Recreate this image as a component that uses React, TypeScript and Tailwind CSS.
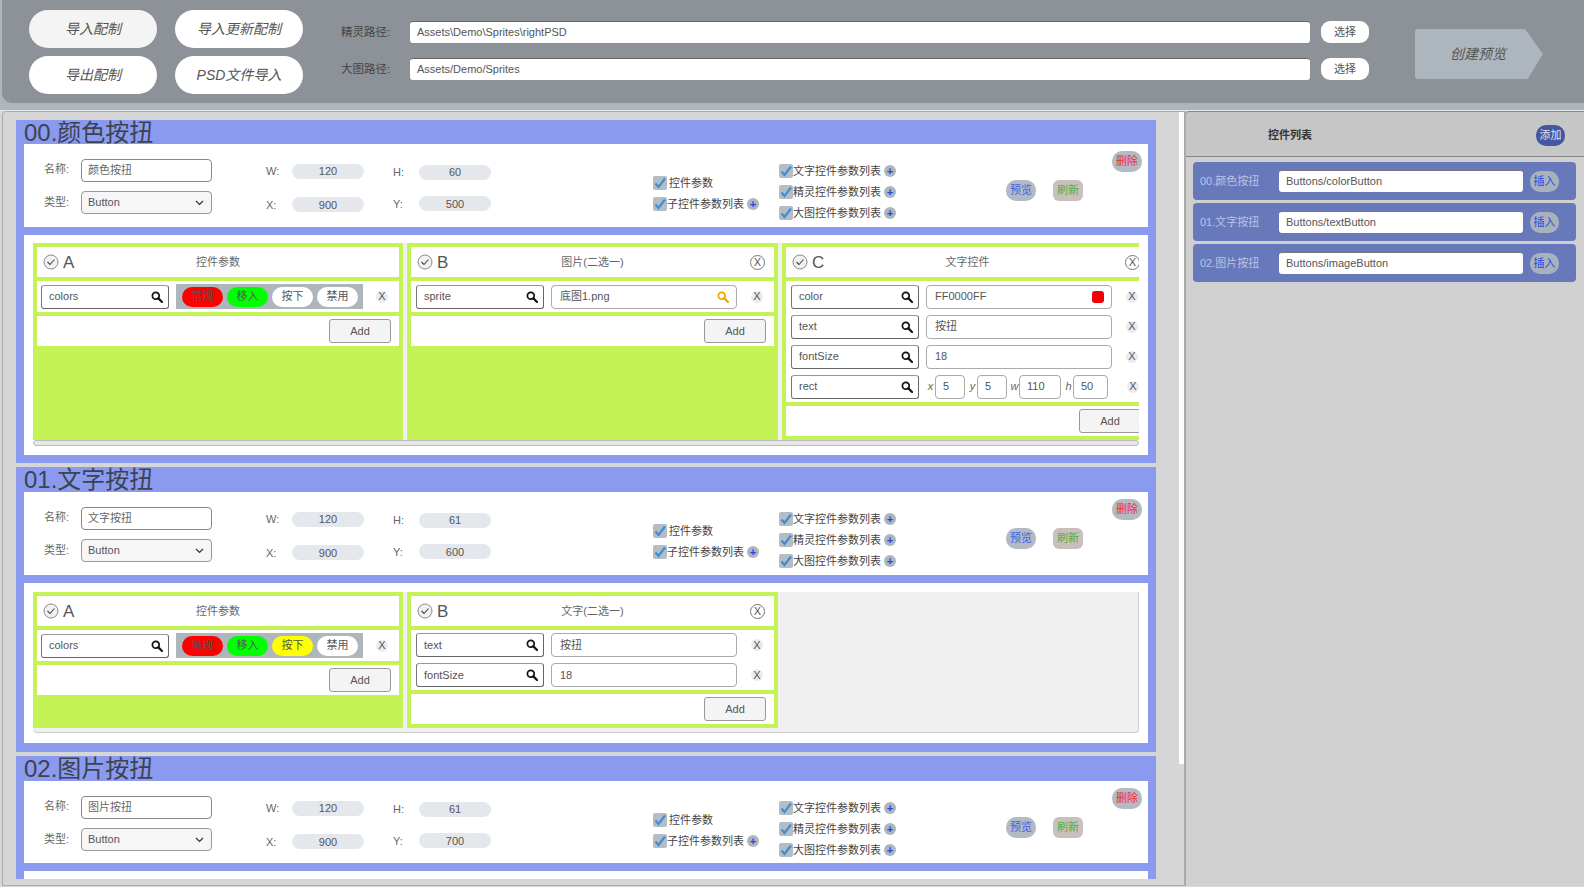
import { ReactNode } from "react";

const FONT = "font-['Liberation_Sans','Noto_Sans_CJK_SC',sans-serif]";

interface SectionData {
  title: string;
  name: string;
  h: string;
  x: string;
  y: string;
  head: string;
  row: string;
  pad: string;
}

const SearchIcon = ({ color = "#111" }: { color?: string }) => (
  <svg width="12" height="12" viewBox="0 0 12 12" fill="none" stroke={color}>
    <circle cx="4.8" cy="4.8" r="3.4" strokeWidth="1.7" />
    <path d="M7.4 7.4 L11 11" strokeWidth="2.2" strokeLinecap="round" />
  </svg>
);

const CheckCircle = () => (
  <svg width="16" height="16" viewBox="0 0 16 16" fill="none" className="shrink-0">
    <circle cx="8" cy="8" r="7" fill="#f2f2f2" stroke="#8a8a8a" />
    <path d="M4.5 8 L7 10.5 L11.5 5.5" stroke="#444" strokeWidth="1.1" />
  </svg>
);

const CloseCircle = () => (
  <div className="w-[15px] h-[15px] shrink-0 rounded-full border border-[#777] flex items-center justify-center text-[11px] leading-none text-[#555]">
    X
  </div>
);

const RemoveX = () => (
  <div className="w-[12px] h-[12px] shrink-0 rounded-full bg-[#e9ecef] flex items-center justify-center text-[11px] leading-none text-[#555]">
    X
  </div>
);

const Check = () => (
  <svg width="14" height="14" viewBox="0 0 14 14" className="shrink-0">
    <rect width="14" height="14" rx="2" fill="#b4bcc6" />
    <path d="M2.5 7.5 L5.5 11 L12 2.5" fill="none" stroke="#3f8fd0" strokeWidth="2.2" />
  </svg>
);

const Plus = () => (
  <div className="w-[12px] h-[12px] shrink-0 rounded-full bg-[#adb5bd] flex items-center justify-center text-[11px] leading-none font-bold text-[#2846e8]">
    +
  </div>
);

const SearchField = ({ label }: { label: string }) => (
  <div className="w-[128px] h-[24px] shrink-0 rounded-[3px] border border-[#666] border-t-[#999] border-l-[#777] bg-white pl-[7px] pr-[5px] flex items-center justify-between text-[11px] text-[#555]">
    <span>{label}</span>
    <SearchIcon />
  </div>
);

const ValueField = ({ children, w }: { children: ReactNode; w: string }) => (
  <div className={`${w} h-[24px] shrink-0 rounded-[4px] border border-[#aaa] bg-white pl-2 pr-[7px] flex items-center justify-between text-[11px] text-[#555]`}>
    {children}
  </div>
);

const AddRow = () => (
  <div className="h-[30px] bg-white flex justify-end items-center pr-2">
    <div className="w-[62px] h-[24px] rounded-[3px] border border-[#999] bg-[#f4f4f4] flex items-center justify-center text-[11px] text-[#555]">
      Add
    </div>
  </div>
);

const PanelHead = ({ letter, title, closable }: { letter: string; title: string; closable?: boolean }) => (
  <div className="h-[30px] bg-white flex items-center pl-[6px] pr-[9px] relative">
    <CheckCircle />
    <span className="ml-[4px] text-[17px] leading-none text-[#555]">{letter}</span>
    <span className="absolute left-0 right-0 text-center text-[11px] text-[#666]">{title}</span>
    <div className="flex-1" />
    {closable && <CloseCircle />}
  </div>
);

const Pill = ({ label, bg }: { label: string; bg: string }) => (
  <div className={`${bg} w-[41px] h-[20px] rounded-[10px] flex items-center justify-center text-[11px] text-[#555]`}>
    {label}
  </div>
);

const ColorsRow = ({ pressed }: { pressed?: boolean }) => (
  <div className="h-[31px] bg-white flex items-center pl-1">
    <SearchField label="colors" />
    <div className="ml-[7px] w-[187px] h-[25px] bg-[#adb5bd] flex items-center gap-[4px] pl-[6px]">
      <Pill label="常规" bg="bg-[#ff0000]" />
      <Pill label="移入" bg="bg-[#00ff00]" />
      <Pill label="按下" bg={pressed ? "bg-[#ffff00]" : "bg-white"} />
      <Pill label="禁用" bg="bg-white" />
    </div>
    <div className="ml-[13px]">
      <RemoveX />
    </div>
  </div>
);

const PanelA = ({ pressed }: { pressed?: boolean }) => (
  <div className="w-[370px] shrink-0 self-stretch bg-[#c3f354] p-1 flex flex-col gap-1">
    <PanelHead letter="A" title="控件参数" />
    <ColorsRow pressed={pressed} />
    <AddRow />
  </div>
);

const FieldRow = ({ label, children }: { label: string; children: ReactNode }) => (
  <div className="h-[24px] flex items-center pl-[5px]">
    <SearchField label={label} />
    <div className="ml-[7px]">
      <ValueField w="w-[186px]">{children}</ValueField>
    </div>
    <div className="ml-[14px]">
      <RemoveX />
    </div>
  </div>
);

const PanelB = () => (
  <div className="w-[371px] shrink-0 self-stretch bg-[#c3f354] p-1 flex flex-col gap-1">
    <PanelHead letter="B" title="图片(二选一)" closable />
    <div className="h-[31px] bg-white flex items-center">
      <FieldRow label="sprite">
        <span>底图1.png</span>
        <SearchIcon color="#f5a300" />
      </FieldRow>
    </div>
    <AddRow />
  </div>
);

const PanelB2 = () => (
  <div className="w-[371px] shrink-0 bg-[#c3f354] p-1 flex flex-col gap-1">
    <PanelHead letter="B" title="文字(二选一)" closable />
    <div className="h-[60px] bg-white flex flex-col justify-center gap-[6px]">
      <FieldRow label="text">按扭</FieldRow>
      <FieldRow label="fontSize">18</FieldRow>
    </div>
    <AddRow />
  </div>
);

const RectCell = ({ axis, value, w }: { axis: string; value: string; w: string }) => (
  <>
    <span className="w-[9px] text-center text-[11px] italic text-[#666]">{axis}</span>
    <div className={`${w} h-[24px] rounded-[4px] border border-[#aaa] flex items-center pl-[7px] text-[11px] text-[#555]`}>
      {value}
    </div>
  </>
);

const PanelC = () => (
  <div className="w-[371px] shrink-0 self-start h-[197px] bg-[#c3f354] p-1 flex flex-col gap-1">
    <PanelHead letter="C" title="文字控件" closable />
    <div className="h-[121px] bg-white flex flex-col justify-center gap-[6px]">
      <FieldRow label="color">
        <span>FF0000FF</span>
        <div className="w-[12px] h-[12px] rounded-[3px] bg-[#f00000]" />
      </FieldRow>
      <FieldRow label="text">按扭</FieldRow>
      <FieldRow label="fontSize">18</FieldRow>
      <div className="h-[24px] flex items-center pl-[5px]">
        <SearchField label="rect" />
        <div className="ml-[7px] flex items-center">
          <RectCell axis="x" value="5" w="w-[30px]" />
          <div className="w-[3px]" />
          <RectCell axis="y" value="5" w="w-[30px]" />
          <div className="w-[3px]" />
          <RectCell axis="w" value="110" w="w-[42px]" />
          <div className="w-[3px]" />
          <RectCell axis="h" value="50" w="w-[35px]" />
        </div>
        <div className="ml-[19px]">
          <RemoveX />
        </div>
      </div>
    </div>
    <AddRow />
  </div>
);

const NumField = ({ label, value, w }: { label: string; value: string; w: string }) => (
  <div className={`${w} flex items-center`}>
    <span className="w-[26px] text-[11px] text-[#666]">{label}</span>
    <div className="w-[72px] h-[15px] rounded-full bg-[#e4e8ed] flex items-center justify-center text-[11px] text-[#555]">
      {value}
    </div>
  </div>
);

const SmallBtn = ({ label, bg, color, rounded = "rounded-[10px]" }: { label: string; bg: string; color: string; rounded?: string }) => (
  <div className={`w-[30px] h-[21px] ${rounded} ${bg} ${color} flex items-center justify-center text-[11px]`}>
    {label}
  </div>
);

const CheckLine = ({ label, plus, gap = "gap-0" }: { label: string; plus?: boolean; gap?: string }) => (
  <div className={`h-[14px] flex items-center ${gap} text-[11px] text-[#444]`}>
    <Check />
    <span>{label}</span>
    {plus && <div className="ml-[3px]"><Plus /></div>}
  </div>
);

const InfoRow = ({ s }: { s: SectionData }) => (
  <div className={`${s.row} bg-white relative flex`}>
    <div className="w-[57px] pl-[20px] pt-[18px] flex flex-col gap-[17px] text-[11px] text-[#666]">
      <span className="h-[14px] leading-[14px]">名称:</span>
      <span className="h-[14px] leading-[14px] mt-[2px]">类型:</span>
    </div>
    <div className="pt-[15px] flex flex-col gap-[9px]">
      <div className="w-[131px] h-[23px] rounded-[4px] border border-[#888] flex items-center pl-[6px] text-[11px] text-[#666]">
        {s.name}
      </div>
      <div className="w-[131px] h-[23px] rounded-[4px] border border-[#999] bg-[#f6f6f6] flex items-center justify-between pl-[6px] pr-[7px] text-[11px] text-[#555]">
        <span>Button</span>
        <svg width="9" height="6" viewBox="0 0 9 6" fill="none" stroke="#333" strokeWidth="1.2">
          <path d="M1 1 L4.5 4.5 L8 1" />
        </svg>
      </div>
    </div>
    <div className="ml-[54px] pt-[19px] flex flex-col gap-[17px]">
      <NumField label="W:" value="120" w="w-[127px]" />
      <NumField label="X:" value={s.x} w="w-[127px]" />
    </div>
    <div className="pt-[20px] flex flex-col gap-[15px]">
      <NumField label="H:" value={s.h} w="w-[126px]" />
      <NumField label="Y:" value={s.y} w="w-[126px]" />
    </div>
    <div className="ml-[134px] pt-[32px] flex flex-col gap-[7px]">
      <CheckLine label="控件参数" gap="gap-[2px]" />
      <CheckLine label="子控件参数列表" plus />
    </div>
    <div className="ml-[20px] pt-[20px] flex flex-col gap-[7px]">
      <CheckLine label="文字控件参数列表" plus />
      <CheckLine label="精灵控件参数列表" plus />
      <CheckLine label="大图控件参数列表" plus />
    </div>
    <div className="ml-[110px] pt-[36px] flex gap-[17px]">
      <SmallBtn label="预览" bg="bg-[#b3bac3]" color="text-[#3f5ff0]" />
      <SmallBtn label="刷新" bg="bg-[#c9c0bd]" color="text-[#4caf50]" rounded="rounded-[6px]" />
    </div>
    <div className="absolute right-[6px] top-[7px]">
      <SmallBtn label="删除" bg="bg-[#b3bac3]" color="text-[#f03030]" />
    </div>
  </div>
);

const Section = ({ s, children }: { s: SectionData; children?: ReactNode }) => (
  <div className={`w-[1140px] shrink-0 bg-[#8a9aee] px-2 ${s.pad}`}>
    <div className={`${s.head} text-[24px] leading-[26px] text-[#3c4250]`}>{s.title}</div>
    <div className="flex flex-col gap-2">
      <InfoRow s={s} />
      {children}
    </div>
  </div>
);

const TopButton = ({ label, muted }: { label: string; muted?: boolean }) => (
  <div className={`w-[128px] h-[38px] rounded-[19px] ${muted ? "bg-[#f4f4f4]" : "bg-white"} flex items-center justify-center text-[14px] italic text-[#555]`}>
    {label}
  </div>
);

const PathRow = ({ label, value }: { label: string; value: string }) => (
  <div className="flex items-center h-[22px]">
    <span className="w-[69px] pt-[2px] text-[11.5px] text-[#444]">{label}</span>
    <div className="w-[900px] h-[22px] rounded-[3px] bg-white border-t border-[#666] flex items-center pl-[7px] text-[11px] text-[#555]">
      {value}
    </div>
    <div className="ml-[11px] w-[48px] h-[22px] rounded-[9px] bg-white flex items-center justify-center text-[11px] text-[#555]">
      选择
    </div>
  </div>
);

const ListItem = ({ label, path }: { label: string; path: string }) => (
  <div className="h-[38px] rounded-[4px] bg-[#6779bb] flex items-center pl-[7px]">
    <span className="w-[79px] text-[11px] text-[#b9c4e6]">{label}</span>
    <div className="w-[244px] h-[22px] rounded-[3px] bg-white border-t border-[#777] flex items-center pl-[7px] text-[11px] text-[#555]">
      {path}
    </div>
    <div className="ml-[7px] w-[29px] h-[21px] rounded-[10px] bg-[#a8b2bd] flex items-center justify-center text-[11px] text-[#2846e8]">
      插入
    </div>
  </div>
);

const sections: SectionData[] = [
  { title: "00.颜色按扭", name: "颜色按扭", h: "60", x: "900", y: "500", head: "h-[24px]", row: "h-[83px]", pad: "pb-2" },
  { title: "01.文字按扭", name: "文字按扭", h: "61", x: "900", y: "600", head: "h-[25px]", row: "h-[83px]", pad: "pb-[9px]" },
  { title: "02.图片按扭", name: "图片按扭", h: "61", x: "900", y: "700", head: "h-[25px]", row: "h-[82px]", pad: "pb-[9px]" },
];

export default function App() {
  return (
    <div className={`${FONT} w-[1584px] h-[887px] overflow-hidden bg-[#d6d6d6] flex flex-col`}>
      {/* top toolbar */}
      <div className="h-[110px] shrink-0 bg-[#adb5bd]">
        <div className="h-[103px] ml-[2px] rounded-bl-[10px] bg-[#8c9298] flex">
          <div className="pl-[27px] pt-[10px] grid grid-cols-[128px_128px] grid-rows-[38px_38px] gap-x-[18px] gap-y-[8px]">
            <TopButton label="导入配制" muted />
            <TopButton label="导入更新配制" />
            <TopButton label="导出配制" />
            <TopButton label="PSD文件导入" />
          </div>
          <div className="ml-[38px] pt-[21px] flex flex-col gap-[15px]">
            <PathRow label="精灵路径:" value="Assets\Demo\Sprites\rightPSD" />
            <PathRow label="大图路径:" value="Assets/Demo/Sprites" />
          </div>
          <div className="ml-[46px] mt-[29px] w-[128px] h-[50px] bg-[#adb5bd] rounded-[3px] [clip-path:polygon(0_0,86%_0,100%_50%,88%_100%,0_100%)] flex items-center justify-center pr-[2px] text-[14px] italic text-[#555]">
            创建预览
          </div>
        </div>
      </div>

      <div className="flex-1 flex min-h-0 border-t border-[#e8e8e8]">
        {/* left scroll area */}
        <div className="w-[1183px] h-[775px] ml-[2px] shrink-0 rounded-tl-[4px] border border-[#aaa] bg-[#d6d6d6] relative overflow-hidden">
          <div className="absolute right-0 top-0 w-[5px] h-[652px] bg-white" />
          <div className="h-[767px] pl-[13px] pt-[8px] flex flex-col gap-[4px] overflow-hidden">
            <Section s={sections[0]}>
              <div className="h-[220px] bg-white px-[9px] pt-[8px]">
                <div className="h-[197px] flex gap-1 overflow-hidden bg-[#f0f0f0]">
                  <PanelA />
                  <PanelB />
                  <PanelC />
                </div>
                <div className="h-[6px] rounded-full border border-[#bbb] bg-[#e8e8e8]" />
              </div>
            </Section>
            <Section s={sections[1]}>
              <div className="h-[160px] bg-white px-[9px] pt-[9px]">
                <div className="h-[141px] bg-[#f0f0f0] border-r border-b border-[#ccc] rounded-b-[4px]">
                  <div className="h-[136px] flex gap-1">
                    <PanelA pressed />
                    <PanelB2 />
                  </div>
                </div>
              </div>
            </Section>
            <Section s={sections[2]}>
              <div className="h-[40px] bg-white" />
            </Section>
          </div>
        </div>

        {/* right list */}
        <div className="flex-1 h-[775px] border-l border-[#aaa] bg-[#d0d0d0]">
          <div className="h-[46px] bg-[#c6c6c6] border-b border-t border-[#888] rounded-tl-[3px] flex items-center justify-between pl-[82px] pr-[19px] pt-[2px]">
            <span className="text-[11px] font-bold text-[#333]">控件列表</span>
            <div className="w-[29px] h-[21px] rounded-[10px] bg-[#4457a0] flex items-center justify-center text-[11px] text-[#dde3f5]">
              添加
            </div>
          </div>
          <div className="pl-[7px] pr-[8px] pt-[5px] flex flex-col gap-[3px]">
            <ListItem label="00.颜色按扭" path="Buttons/colorButton" />
            <ListItem label="01.文字按扭" path="Buttons/textButton" />
            <ListItem label="02.图片按扭" path="Buttons/imageButton" />
          </div>
        </div>
      </div>
    </div>
  );
}
